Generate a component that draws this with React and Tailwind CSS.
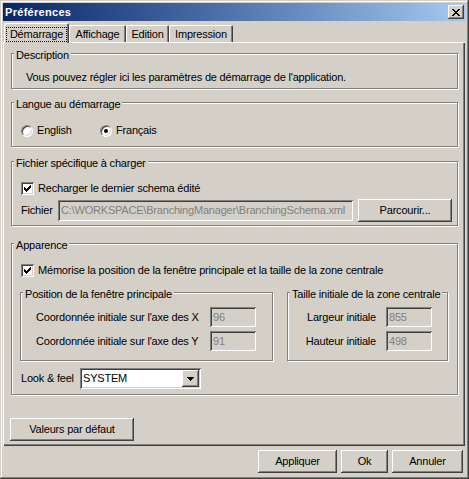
const raised =
  "shadow-[inset_-1px_-1px_0_#404040,inset_1px_1px_0_#fff,inset_-2px_-2px_0_#808080]";
const sunken =
  "shadow-[inset_1px_1px_0_#808080,inset_-1px_-1px_0_#fff,inset_2px_2px_0_#404040,inset_-2px_-2px_0_#d4d0c8]";

function Group({ title, className = "", children }) {
  return (
    <div
      className={`relative shrink-0 border border-[#808080] shadow-[inset_1px_1px_0_#fff,1px_1px_0_#fff] ${className}`}
    >
      <span className="absolute -top-[5px] left-[2px] whitespace-nowrap bg-[#d4d0c8] px-[2px]">{title}</span>
      {children}
    </div>
  );
}

function Check() {
  return (
    <span className={`flex h-[13px] w-[13px] shrink-0 items-center justify-center bg-white ${sunken}`}>
      <svg width="7" height="7" viewBox="0 0 7 7" shapeRendering="crispEdges">
        <path
          d="M6 0h1v1h-1z M5 1h2v1h-2z M0 2h1v1h-1z M4 2h3v1h-3z M0 3h2v1h-2z M3 3h3v1h-3z M0 4h5v1h-5z M1 5h3v1h-3z M2 6h1v1h-1z"
          fill="#000"
        />
      </svg>
    </span>
  );
}

function Radio({ on }) {
  return (
    <span className="flex h-[12px] w-[12px] shrink-0 items-center justify-center rounded-full border border-t-[#808080] border-r-white border-b-white border-l-[#808080] bg-white shadow-[inset_1px_1px_0_#404040,inset_-1px_-1px_0_#d4d0c8]">
      {on && <span className="h-[4px] w-[4px] rounded-full bg-black" />}
    </span>
  );
}

function Field({ value, className = "" }) {
  return (
    <div className={`flex shrink-0 items-center overflow-hidden whitespace-nowrap bg-[#d4d0c8] pl-[3px] text-[#808080] ${sunken} ${className}`}>
      {value}
    </div>
  );
}

function Button({ children, className = "" }) {
  return (
    <button className={`flex shrink-0 items-center justify-center bg-[#d4d0c8] ${raised} ${className}`}>
      {children}
    </button>
  );
}

function Tab({ label, active, className = "" }) {
  if (active) {
    return (
      <div
        className={`relative z-10 -mb-px flex h-[20px] shrink-0 items-start justify-center rounded-t-[2px] bg-[#d4d0c8] pt-[5px] shadow-[inset_1px_1px_0_#fff,inset_-1px_0_0_#404040,inset_-2px_0_0_#808080] ${className}`}
      >
        <span className="pointer-events-none absolute top-[4px] right-[2px] bottom-[1px] left-[2px] border border-dotted border-black" />
        {label}
      </div>
    );
  }
  return (
    <div
      className={`flex h-[17px] shrink-0 items-start justify-center rounded-t-[2px] bg-[#d4d0c8] pt-[3px] shadow-[inset_1px_1px_0_#fff,inset_-1px_0_0_#404040,inset_-2px_0_0_#808080] ${className}`}
    >
      {label}
    </div>
  );
}

export default function App() {
  return (
    <div className="flex h-[479px] w-[469px] flex-col bg-[#d4d0c8] p-[3px] font-['Liberation_Sans',Arial,sans-serif] text-[11px] leading-[13px] tracking-[-0.2px] text-black shadow-[inset_-1px_-1px_0_#404040,inset_1px_1px_0_#d4d0c8,inset_-2px_-2px_0_#808080,inset_2px_2px_0_#fff]">
      {/* title bar */}
      <div className="flex h-[18px] shrink-0 items-center justify-between bg-linear-to-r from-[#0a246a] to-[#a6caf0] pl-[2px] pr-[2px]">
        <span className="font-bold tracking-[0.3px] text-white">Préférences</span>
        <button className={`flex h-[14px] w-[16px] items-center justify-center bg-[#d4d0c8] ${raised}`}>
          <svg width="8" height="7" viewBox="0 0 8 7" shapeRendering="crispEdges">
            <path
              d="M0 0h2v1h-2z M6 0h2v1h-2z M1 1h2v1h-2z M5 1h2v1h-2z M2 2h4v1h-4z M3 3h2v1h-2z M2 4h4v1h-4z M1 5h2v1h-2z M5 5h2v1h-2z M0 6h2v1h-2z M6 6h2v1h-2z"
              fill="#000"
            />
          </svg>
        </button>
      </div>

      {/* tabs */}
      <div className="mt-[2px] flex h-[19px] shrink-0 items-end pl-[1px]">
        <Tab label="Démarrage" active className="w-[65px]" />
        <Tab label="Affichage" className="w-[57px]" />
        <Tab label="Edition" className="w-[43px]" />
        <Tab label="Impression" className="w-[64px]" />
      </div>

      {/* panel */}
      <div className="flex h-[404px] w-[462px] shrink-0 flex-col pt-[11px] pr-[7px] pl-[8px] shadow-[inset_1px_1px_0_#fff,inset_-1px_-1px_0_#404040,inset_-2px_-2px_0_#808080]">
        <Group title="Description" className="h-[36px] pt-[17px] pl-[14px]">
          <p>Vous pouvez régler ici les paramètres de démarrage de l'application.</p>
        </Group>

        <Group title="Langue au démarrage" className="mt-[13px] h-[45px] pt-[21px] pl-[9px]">
          <div className="flex">
            <label className="flex w-[79px] items-center gap-[4px]">
              <Radio />
              <span>English</span>
            </label>
            <label className="flex items-center gap-[4px]">
              <Radio on />
              <span>Français</span>
            </label>
          </div>
        </Group>

        <Group title="Fichier spécifique à charger" className="mt-[14px] h-[65px] pt-[20px] pl-[9px]">
          <label className="flex items-center gap-[4px]">
            <Check />
            <span>Recharger le dernier schema édité</span>
          </label>
          <div className="mt-[4px] flex h-[23px] items-center">
            <span className="w-[37px]">Fichier</span>
            <Field
              value="C:\WORKSPACE\BranchingManager\BranchingSchema.xml"
              className="h-[21px] w-[295px]"
            />
            <Button className="ml-[5px] h-[23px] w-[94px]">Parcourir...</Button>
          </div>
        </Group>

        <Group title="Apparence" className="mt-[17px] h-[152px] pt-[20px] pl-[9px]">
          <label className="flex items-center gap-[4px]">
            <Check />
            <span>Mémorise la position de la fenêtre principale et la taille de la zone centrale</span>
          </label>
          <div className="mt-[15px] -ml-px flex">
            <Group title="Position de la fenêtre principale" className="h-[69px] w-[253px] pt-[14px] pl-[15px]">
              <div className="flex h-[20px] items-center">
                <span className="w-[174px]">Coordonnée initiale sur l'axe des X</span>
                <Field value="96" className="h-[20px] w-[46px]" />
              </div>
              <div className="mt-[4px] flex h-[20px] items-center">
                <span className="w-[174px]">Coordonnée initiale sur l'axe des Y</span>
                <Field value="91" className="h-[20px] w-[46px]" />
              </div>
            </Group>
            <Group title="Taille initiale de la zone centrale" className="ml-[14px] h-[69px] w-[161px] pt-[14px]">
              <div className="flex h-[20px] items-center">
                <span className="w-[88px] text-right">Largeur initiale</span>
                <Field value="855" className="ml-[10px] h-[20px] w-[46px]" />
              </div>
              <div className="mt-[4px] flex h-[20px] items-center">
                <span className="w-[88px] text-right">Hauteur initiale</span>
                <Field value="498" className="ml-[10px] h-[20px] w-[46px]" />
              </div>
            </Group>
          </div>
          <div className="mt-[7px] flex h-[21px] items-center">
            <span className="w-[59px]">Look &amp; feel</span>
            <div className={`flex h-[21px] w-[121px] items-center justify-between bg-white p-[2px] pl-[3px] ${sunken}`}>
              <span>SYSTEM</span>
              <span className={`flex h-[17px] w-[17px] items-center justify-center bg-[#d4d0c8] ${raised}`}>
                <svg width="7" height="4" viewBox="0 0 7 4" shapeRendering="crispEdges">
                  <path d="M0 0h7v1h-7z M1 1h5v1h-5z M2 2h3v1h-3z M3 3h1v1h-1z" fill="#000" />
                </svg>
              </span>
            </div>
          </div>
        </Group>

        <Button className="mt-[23px] -ml-px h-[23px] w-[124px]">Valeurs par défaut</Button>
      </div>

      {/* dialog buttons */}
      <div className="mt-[4px] flex shrink-0 justify-end gap-[4px] pr-[3px]">
        <Button className="h-[23px] w-[79px]">Appliquer</Button>
        <Button className="h-[23px] w-[47px]">Ok</Button>
        <Button className="h-[23px] w-[71px]">Annuler</Button>
      </div>
    </div>
  );
}
